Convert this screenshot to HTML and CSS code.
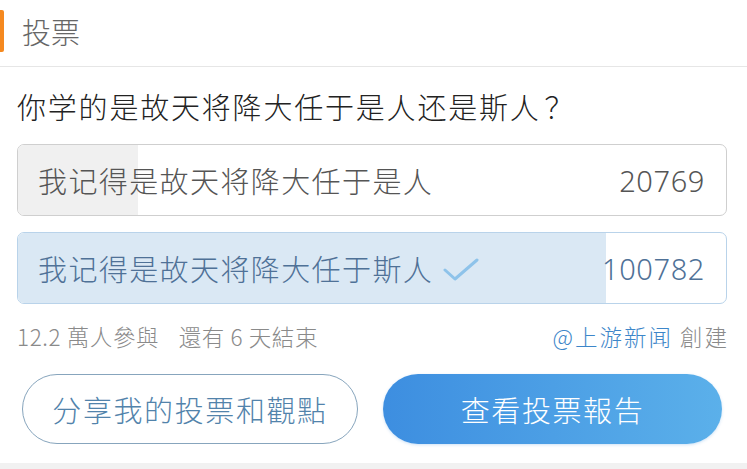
FILE: index.html
```html
<!DOCTYPE html>
<html lang="zh">
<head>
  <meta charset="UTF-8" />
  <title>投票</title>
  <link rel="stylesheet" href="styles.css">
</head>
<body>
  <div class="vote">
    <div class="vote-head">
      <span class="mark"></span>
      <span class="head-title">投票</span>
    </div>
    <div class="vote-body">
      <div class="question">你学的是故天将降大任于是人还是斯人<span class="qmark">？</span></div>

      <div class="option">
        <div class="fill" style="width: 17%"></div>
        <span class="label">我记得是故天将降大任于是人</span>
        <span class="count">20769</span>
      </div>

      <div class="option chosen">
        <div class="fill" style="width: 83%"></div>
        <span class="label">我记得是故天将降大任于斯人
          <svg class="check" width="36" height="26" viewBox="0 0 36 26">
            <path d="M2 13 L12 22 L34 3" fill="none" stroke="#8ec3ea" stroke-width="3" stroke-linecap="round" stroke-linejoin="round"/>
          </svg>
        </span>
        <span class="count">100782</span>
      </div>

      <div class="meta">
        <div>
          <span>12.2 萬人參與</span>
          <span class="left-gap">還有 6 天結束</span>
        </div>
        <div class="creator"><a class="author" href="#">@上游新闻</a> 創建</div>
      </div>

      <div class="actions">
        <button class="btn share">分享我的投票和觀點</button>
        <button class="btn report">查看投票報告</button>
      </div>
    </div>
    <div class="bottom-gap"></div>
  </div>
</body>
</html>
```

FILE: styles.css
```css
body {
  margin: 0;
  background: #fff;
  font-family: "Noto Sans CJK SC", "Noto Sans", sans-serif;
  font-weight: 300;
  width: 747px;
  height: 469px;
  overflow: hidden;
}
.vote-head {
  display: flex;
  align-items: center;
  height: 66px;
  border-bottom: 1px solid #e6e6e6;
}
.mark {
  width: 4px;
  height: 42px;
  background: #f5891f;
  border-radius: 0 2px 2px 0;
  margin-top: -4px;
}
.head-title {
  margin-left: 18px;
  margin-top: -4px;
  font-size: 29px;
  color: #666;
}
.vote-body {
  padding: 0 20px 0 17px;
}
.question {
  margin-top: 19px;
  font-size: 29px;
  letter-spacing: 1.8px;
  color: #222;
  line-height: 40px;
}
.qmark {
  font-family: "Noto Sans CJK TC", sans-serif;
  margin-left: 4px;
}
.option {
  position: relative;
  display: flex;
  align-items: center;
  justify-content: space-between;
  height: 70px;
  margin-top: 18px;
  padding: 0 21px 0 20px;
  border: 1px solid #cfcfcf;
  border-radius: 7px;
  overflow: hidden;
  font-size: 29px;
  color: #555;
}
.option + .option {
  margin-top: 16px;
}
.option .fill {
  position: absolute;
  left: 0;
  top: 0;
  bottom: 0;
  background: #f0f0f0;
}
.option .label,
.option .count {
  position: relative;
  letter-spacing: 1.4px;
}
.option .count {
  font-family: "Noto Sans", sans-serif;
  font-size: 29px;
  letter-spacing: 0.6px;
}
.option.chosen {
  border-color: #b9d3ea;
  color: #4f7197;
}
.option.chosen .fill {
  background: #dae8f4;
}
.check {
  vertical-align: -2px;
  margin-left: 2px;
}
.meta {
  display: flex;
  justify-content: space-between;
  margin-top: 16px;
  font-size: 22.5px;
  letter-spacing: 0.6px;
  color: #8a8a8a;
  line-height: 32px;
}
.left-gap {
  margin-left: 14px;
}
.creator {
  letter-spacing: 2px;
  margin-right: -2px;
}
.author {
  color: #3d86c9;
  text-decoration: none;
}
.actions {
  display: flex;
  justify-content: space-between;
  margin-top: 22px;
  padding: 0 5px;
}
.btn {
  width: 336px;
  height: 70px;
  border-radius: 35px;
  font-family: inherit;
  font-weight: 300;
  font-size: 29px;
  letter-spacing: 1.6px;
}
.btn.share {
  background: #fff;
  border: 1px solid #87a5bd;
  color: #5283ab;
}
.btn.report {
  width: 339px;
  border: none;
  color: #fff;
  background: linear-gradient(90deg, #3d8ee0, #5bb0ea);
  box-shadow: 0 1px 3px rgba(60, 140, 220, 0.25);
}
.bottom-gap {
  margin-top: 19px;
  height: 8px;
  background: #f1f1f1;
}
```
